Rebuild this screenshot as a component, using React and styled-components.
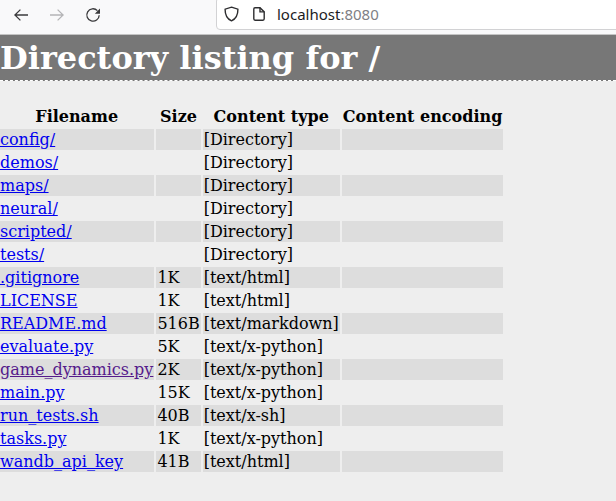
import React from "react";
import styled, { createGlobalStyle } from "styled-components";

const Global = createGlobalStyle`
  html, body { margin: 0; padding: 0; background: #eeeeee; }
  body { font-family: "DejaVu Serif", serif; font-size: 16px; color: #000; overflow: hidden; }
`;
const Page = styled.div`width: 616px; height: 501px; overflow: hidden; background: #eeeeee;`;
const Toolbar = styled.div`
  height: 34px; box-sizing: content-box; background: #f9f9fa; border-bottom: 1px solid #c4c4c4;
  display: flex; align-items: flex-start; padding-left: 14px; position: relative; overflow: hidden;
`;
const NavButton = styled.span`
  width: 14px; height: 14px; margin: 8px 22px 0 0; display: flex; color: ${p => p.$disabled ? "#b4b4b6" : "#3a3a3c"};
`;
const UrlBar = styled.div`
  position: absolute; left: 216px; top: -3px; width: 410px; height: 33px; box-sizing: border-box;
  background: #fff; border: 1px solid #d2d2d4; border-radius: 4px;
  display: flex; align-items: center; padding-left: 7px; color: #1c1c1e;
  font: 15px "Noto Sans", sans-serif;
`;
const UrlIcon = styled.span`display: flex; width: ${p => p.$w}px; height: 16px; margin-right: ${p => p.$gap}px; color: #2e2e30;`;
const Port = styled.span`color: #808085;`;
const Title = styled.h1`
  margin: 0; height: 45px; background: #777777; color: #fff; border-bottom: 1px dashed #fff;
  font-size: 32px; line-height: 46px; font-weight: 700; white-space: nowrap;
`;
const Listing = styled.table`
  border-spacing: 2px; margin: 23px 0 0 -3px; border-collapse: separate;
`;
const Head = styled.th`padding: 0 1px; font-size: 16px; height: 21px; line-height: 21px; white-space: nowrap;`;
const Row = styled.tr`background: ${p => p.$odd ? "#dddddd" : "transparent"};`;
const Cell = styled.td`padding: 0 1px; height: 21px; line-height: 21px; white-space: nowrap;`;
const FileLink = styled.a`color: ${p => p.$visited ? "#551a8b" : "#0000ee"}; text-decoration: underline;`;

const rows = [
  ["config/", "", "[Directory]"], ["demos/", "", "[Directory]"], ["maps/", "", "[Directory]"],
  ["neural/", "", "[Directory]"], ["scripted/", "", "[Directory]"], ["tests/", "", "[Directory]"],
  [".gitignore", "1K", "[text/html]"], ["LICENSE", "1K", "[text/html]"], ["README.md", "516B", "[text/markdown]"],
  ["evaluate.py", "5K", "[text/x-python]"], ["game_dynamics.py", "2K", "[text/x-python]"], ["main.py", "15K", "[text/x-python]"],
  ["run_tests.sh", "40B", "[text/x-sh]"], ["tasks.py", "1K", "[text/x-python]"], ["wandb_api_key", "41B", "[text/html]"],
];

export default function App() {
  return (
    <Page>
      <Global />
      <Toolbar>
        <NavButton>
          <svg width="14" height="14" viewBox="0 0 14 14" fill="none" stroke="currentColor" strokeWidth="1.3"><path d="M0.6 7H14M6.4 1.6 0.9 7 6.4 12.4" /></svg>
        </NavButton>
        <NavButton $disabled>
          <svg width="14" height="14" viewBox="0 0 14 14" fill="none" stroke="currentColor" strokeWidth="1.3"><path d="M13.4 7H0M7.6 1.6 13.1 7 7.6 12.4" /></svg>
        </NavButton>
        <NavButton>
          <svg width="14" height="14" viewBox="0 0 14 14" fill="none" stroke="currentColor" strokeWidth="1.3" overflow="visible"><path d="M11.4 2.6A6.2 6.2 0 1 0 13.2 7.2" /><path d="M14 .6v5.2H8.8z" fill="currentColor" stroke="none" /></svg>
        </NavButton>
        <UrlBar>
          <UrlIcon $w={15} $gap={14}>
            <svg width="15" height="16" viewBox="0 0 15 16" fill="none" stroke="currentColor" strokeWidth="1.4"><path d="M7.5 1.2 13.9 3.2C14 9 12 12.8 7.5 14.8 3 12.8 1 9 1.1 3.2z" /></svg>
          </UrlIcon>
          <UrlIcon $w={12} $gap={12}>
            <svg width="12" height="16" viewBox="0 0 12 16" fill="none" stroke="currentColor" strokeWidth="1.4"><path d="M.8 3C.8 2.2 1.3 1.7 2 1.7H7L11.2 5.9V12.8C11.2 13.6 10.7 14.2 10 14.2H2C1.3 14.2.8 13.6.8 12.8z" /><path d="M7 1.7V5.9H11.2" /></svg>
          </UrlIcon>
          <span>localhost<Port>:8080</Port></span>
        </UrlBar>
      </Toolbar>
      <Title>Directory listing for /</Title>
      <Listing>
        <thead>
          <tr><Head>Filename</Head><Head>Size</Head><Head>Content type</Head><Head>Content encoding</Head></tr>
        </thead>
        <tbody>
          {rows.map((r, i) => (
            <Row key={r[0]} $odd={i % 2 === 0}>
              <Cell><FileLink href="#" $visited={r[0] === "game_dynamics.py"}>{r[0]}</FileLink></Cell>
              <Cell>{r[1]}</Cell>
              <Cell>{r[2]}</Cell>
              <Cell></Cell>
            </Row>
          ))}
        </tbody>
      </Listing>
    </Page>
  );
}
